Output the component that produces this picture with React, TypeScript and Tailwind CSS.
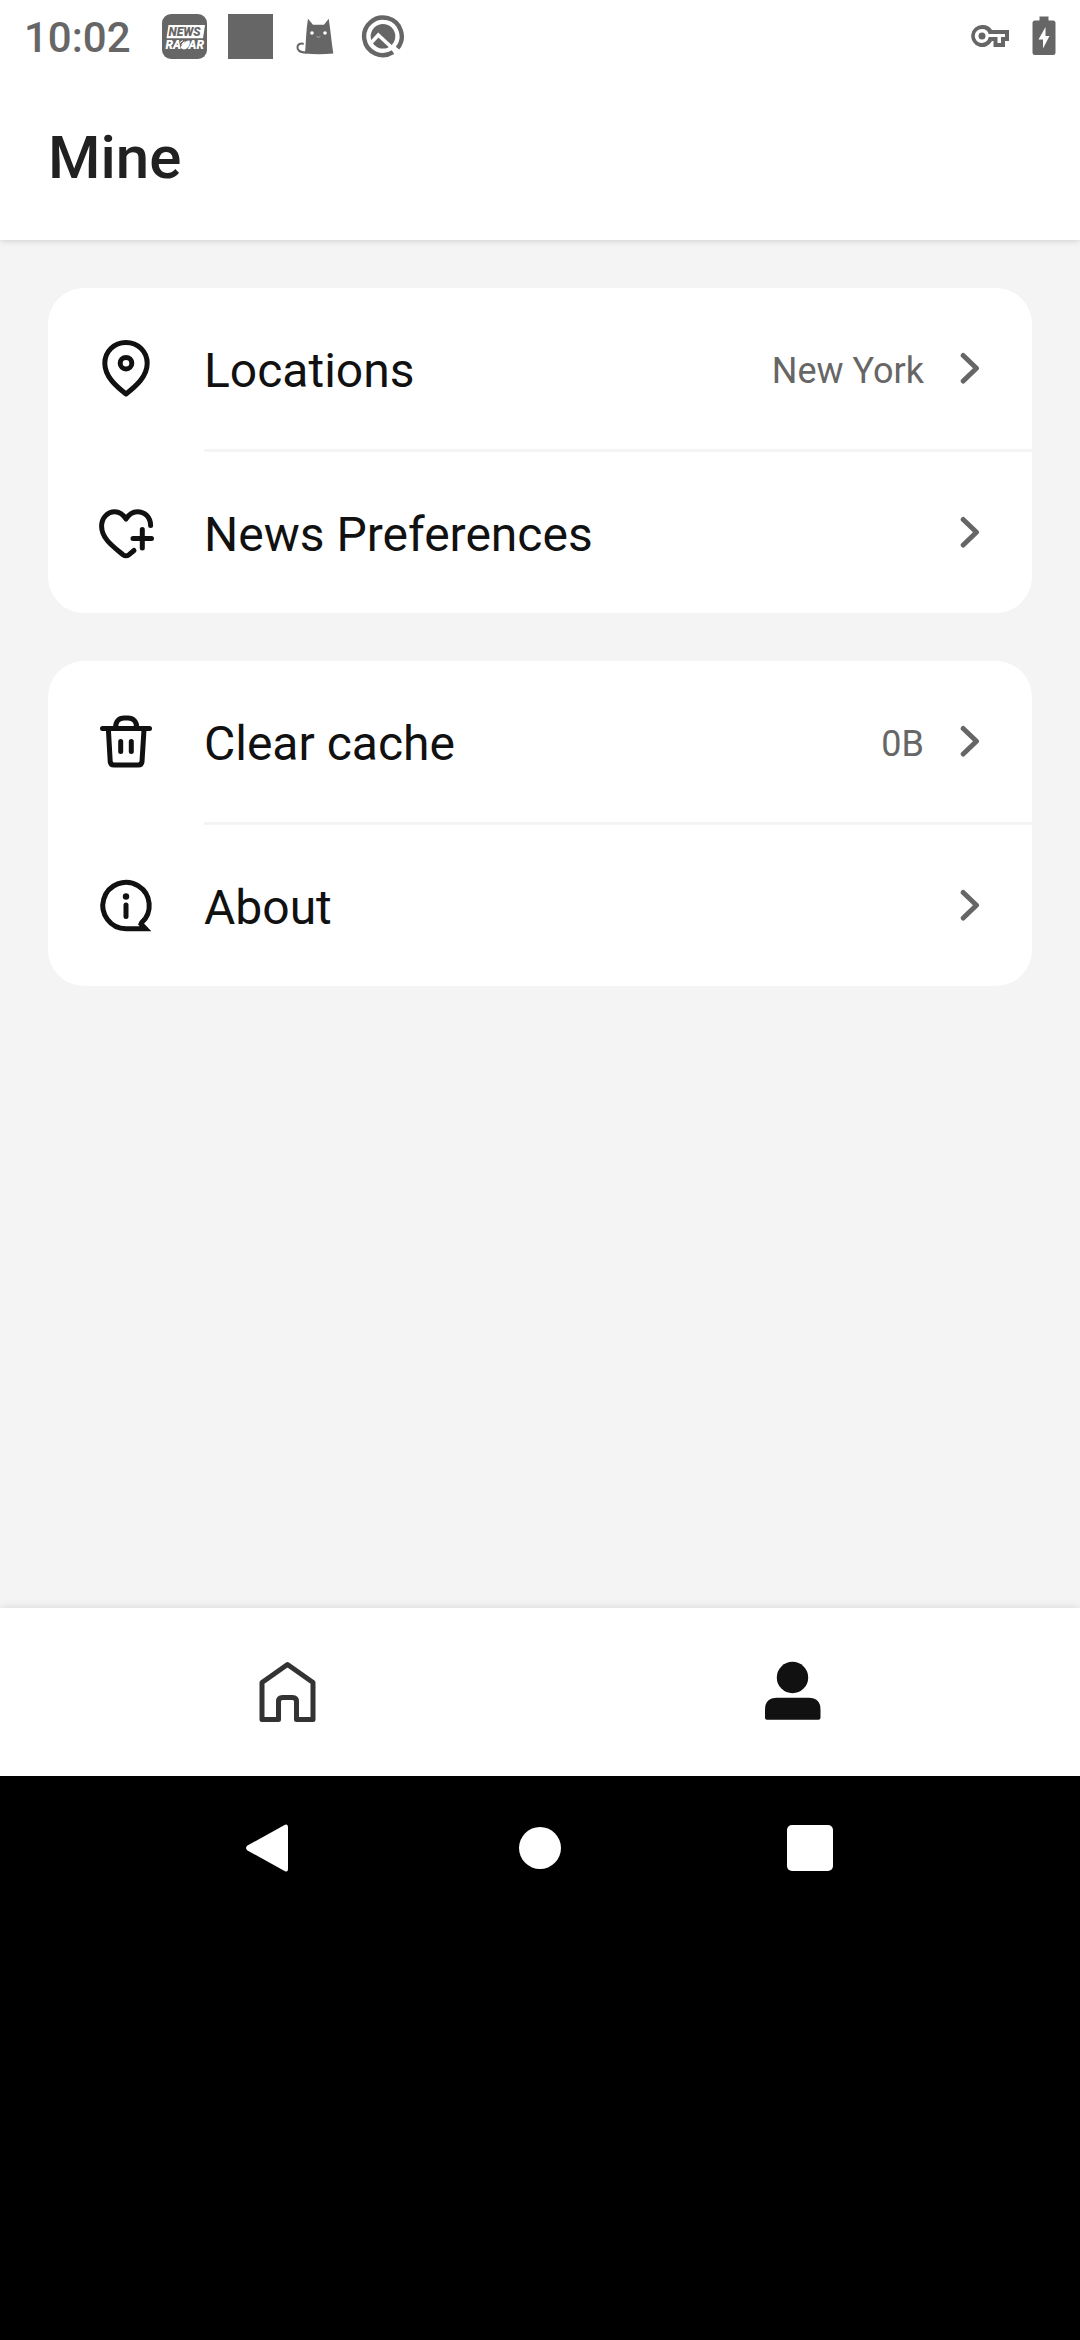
import type { ReactNode } from "react";

const line = {
  fill: "none",
  stroke: "currentColor",
  strokeWidth: 5,
  strokeLinecap: "round" as const,
  strokeLinejoin: "round" as const,
};

function NewsRadarIcon() {
  return (
    <svg className="size-[45px]" viewBox="0 0 45 45" aria-hidden="true">
      <rect width="45" height="45" rx="9" fill="#666" />
      <path d="M6.5 11H43L41 24.3H4.5Z" fill="#fff" />
      <g fontFamily="Roboto" fontWeight="900" fontStyle="italic">
        <text x="6.5" y="22" fontSize="12" fill="#666">NEWS</text>
        <text x="3.5" y="35" fontSize="12" fill="#fff">RA</text>
        <text x="26.5" y="35" fontSize="12" fill="#fff">AR</text>
      </g>
      <path d="M18.500 34C19.500 30 24 26 27.500 26.500C29 30 26 35 22 35.500Z" fill="#fff" />
      <path d="M18 28.500L21 26.500M19.500 30.500L22.500 27.500" stroke="#fff" strokeWidth="1" />
    </svg>
  );
}

function CatIcon() {
  return (
    <svg className="size-[45px]" viewBox="0 0 45 45" aria-hidden="true">
      <path d="M14 4.700L19 10.700H30L34.700 4.700C36.500 16 37.500 28 39.300 39.500C30 40.600 20 40.600 11 39.500C12 28 12 16 14 4.700Z" fill="#666" />
      <path d="M12 38.500C5 38.500 3 35.500 3.500 32.500C4 29.800 6.500 29.300 9 29.800" fill="none" stroke="#666" strokeWidth="2" strokeLinecap="round" />
      <circle cx="18" cy="19" r="1.800" fill="#fff" />
      <circle cx="31" cy="19" r="1.800" fill="#fff" />
      <path d="M22.500 22.500Q24.300 24 26.500 22.500" fill="none" stroke="#aaa" strokeWidth="1" />
    </svg>
  );
}

function SearchRingIcon() {
  return (
    <svg className="size-[45px]" viewBox="0 0 45 45" aria-hidden="true">
      <path d="M33 38.200A18.800 18.800 0 1 1 37.500 34.200" fill="none" stroke="#666" strokeWidth="4.400" />
      <circle cx="23" cy="22.300" r="12.300" fill="#666" />
      <path d="M10 30L18.300 21L36 37.500" fill="none" stroke="#fff" strokeWidth="3.600" />
    </svg>
  );
}

function KeyIcon() {
  return (
    <svg className="h-6 w-10" viewBox="0 0 40 24" aria-hidden="true">
      <path
        fillRule="evenodd"
        fill="#666"
        d="M12 1A11 11 0 1 0 22 17H23.500V23H35V17H39V6H22A11 11 0 0 0 12 1ZM12 5A7 7 0 0 1 18.700 10H35V13H31V19H27.500V13H18.700A7 7 0 1 1 12 5ZM12 8.500A3.500 3.500 0 1 0 12 15.500A3.500 3.500 0 1 0 12 8.500Z"
      />
    </svg>
  );
}

function BatteryIcon() {
  return (
    <svg className="h-10 w-6" viewBox="0 0 24 40" aria-hidden="true">
      <path d="M7.500 0.500H16.500V4.500H21Q23.500 4.500 23.500 7V36.500Q23.500 39 21 39H3Q0.500 39 0.500 36.500V7Q0.500 4.500 3 4.500H7.500Z" fill="#666" />
      <path d="M13.500 11L6.500 23.500H11V32.500L17.500 20H13.500Z" fill="#fff" />
    </svg>
  );
}

function PinIcon() {
  return (
    <svg className="size-[60px]" viewBox="0 0 60 60" aria-hidden="true" {...line}>
      <path d="M30 3.500C18 3.500 8.800 12.700 8.800 24.200C8.800 37.500 20 47 30 55C40 47 51.200 37.500 51.200 24.200C51.200 12.700 42 3.500 30 3.500Z" />
      <circle cx="30" cy="24.200" r="5.800" />
    </svg>
  );
}

function HeartPlusIcon() {
  return (
    <svg className="size-[60px]" viewBox="0 0 60 60" aria-hidden="true" {...line}>
      <path d="M38 47.500L33 51.700Q30 53.800 27 51.700C17 43.500 5.600 35.500 5.600 23.200C5.600 15 11.500 8.700 18.700 8.700C23.500 8.700 27.300 11.500 30 16C32.700 11.500 36.500 8.700 41.300 8.700C49 8.700 54.600 14.500 54.600 22.500" />
      <path d="M37 35.500H55.500M46.300 26.500V45" />
    </svg>
  );
}

function TrashIcon() {
  return (
    <svg className="size-[60px]" viewBox="0 0 60 60" aria-hidden="true" {...line}>
      <path d="M6.500 16.500H53.500" />
      <path d="M19.600 15.500C19.600 9.500 23 6 28 6H32C37 6 40.700 9.500 40.700 15.500" />
      <path d="M12.400 17.500L14.200 49.500Q14.400 53 18 53H42.300Q45.800 53 46 49.500L48 17.500" />
      <path d="M24.700 29.500V39.500M35.300 29.500V39.500" />
    </svg>
  );
}

function InfoIcon() {
  return (
    <svg className="size-[60px]" viewBox="0 0 60 60" aria-hidden="true" {...line}>
      <path d="M30 52.700A23.200 23.200 0 1 1 45.600 46.700L45 48L49.500 52.700Z" strokeLinejoin="miter" />
      <path d="M30 29V40.500" />
      <circle cx="30" cy="20.500" r="3.200" fill="currentColor" stroke="none" />
    </svg>
  );
}

function ChevronIcon() {
  return (
    <svg className="h-9 w-6 text-[#666]" viewBox="0 0 24 36" aria-hidden="true" {...line}>
      <path d="M3.200 4.500L16.500 17.200L3.200 30" />
    </svg>
  );
}

function HomeIcon() {
  return (
    <svg className="size-[72px] text-[#333]" viewBox="0 0 72 72" aria-hidden="true" {...line}>
      <path d="M10 26.500L35.500 8.500L61 26.500V63.500H44.500V45.500Q44.500 41.500 40.500 41.500H30.500Q26.500 41.500 26.500 45.500V63.500H10Z" />
    </svg>
  );
}

function PersonIcon() {
  return (
    <svg className="size-[72px] text-[#111]" viewBox="0 0 72 72" fill="currentColor" aria-hidden="true">
      <circle cx="35.500" cy="21.500" r="15.700" />
      <path d="M8 53.700Q8 41.700 20 41.700H51.500Q63.500 41.700 63.500 53.700V61.700Q63.500 63.700 61.500 63.700H10Q8 63.700 8 61.700Z" />
    </svg>
  );
}

type RowProps = { icon: ReactNode; label: string; value?: string };

function Row({ icon, label, value }: RowProps) {
  return (
    <li className="group">
      <button type="button" className="flex h-[161px] w-full items-center px-12 text-left">
        {icon}
        <span className="ml-12 flex-1 pt-1 text-[48px] leading-[56px]">{label}</span>
        {value && <span className="mr-9 pt-1 text-[36px] leading-[42px] text-[#666]">{value}</span>}
        <ChevronIcon />
      </button>
      <div className="ml-[156px] h-[3px] bg-[#f4f4f4] group-last:hidden" />
    </li>
  );
}

function Card({ children }: { children: ReactNode }) {
  return <ul className="overflow-hidden rounded-[36px] bg-white">{children}</ul>;
}

export default function App() {
  return (
    <div className="flex min-h-screen flex-col bg-[#f4f4f4] font-[Roboto,sans-serif] text-[#111]">
      <header className="z-10 bg-white shadow-[0_1px_6px_rgba(0,0,0,0.15)]">
        <div className="flex h-[72px] items-center justify-between px-6">
          <div className="flex items-center gap-[21px]">
            <time className="mr-[10px] pt-1 text-[42px] leading-[48px] font-medium text-[#666]">10:02</time>
            <NewsRadarIcon />
            <div className="size-[45px] bg-[#666]" />
            <CatIcon />
            <SearchRingIcon />
          </div>
          <div className="flex items-center gap-[22px]">
            <KeyIcon />
            <BatteryIcon />
          </div>
        </div>
        <div className="flex h-[168px] items-center px-12">
          <h1 className="pt-1 text-[60px] leading-[70px] font-medium text-[#212121]">Mine</h1>
        </div>
      </header>

      <main className="flex flex-1 flex-col gap-12 p-12">
        <Card>
          <Row icon={<PinIcon />} label="Locations" value="New York" />
          <Row icon={<HeartPlusIcon />} label="News Preferences" />
        </Card>
        <Card>
          <Row icon={<TrashIcon />} label="Clear cache" value="0B" />
          <Row icon={<InfoIcon />} label="About" />
        </Card>
      </main>

      <nav aria-label="Main" className="grid h-[168px] grid-cols-2 bg-white px-[35px] shadow-[0_-1px_8px_rgba(0,0,0,0.1)]">
        <button type="button" aria-label="Home" className="flex items-center justify-center">
          <HomeIcon />
        </button>
        <button type="button" aria-label="Mine" aria-current="page" className="flex items-center justify-center">
          <PersonIcon />
        </button>
      </nav>

      <footer className="z-10 bg-black px-[12.5%] pb-[420px]">
        <div className="grid h-36 grid-cols-3">
          <button type="button" aria-label="Back" className="flex items-center justify-center">
            <svg className="size-12" viewBox="0 0 48 48" fill="#fff" aria-hidden="true">
              <path d="M1.500 21.500L39 0.700Q42 -0.500 42 3V45Q42 48.500 39 47.300L1.500 26.500Q-1.500 24 1.500 21.500Z" />
            </svg>
          </button>
          <button type="button" aria-label="Home screen" className="flex items-center justify-center">
            <span className="size-[42px] rounded-full bg-white" />
          </button>
          <button type="button" aria-label="Recent apps" className="flex items-center justify-center">
            <span className="size-[46px] rounded-[5px] bg-white" />
          </button>
        </div>
      </footer>
    </div>
  );
}
